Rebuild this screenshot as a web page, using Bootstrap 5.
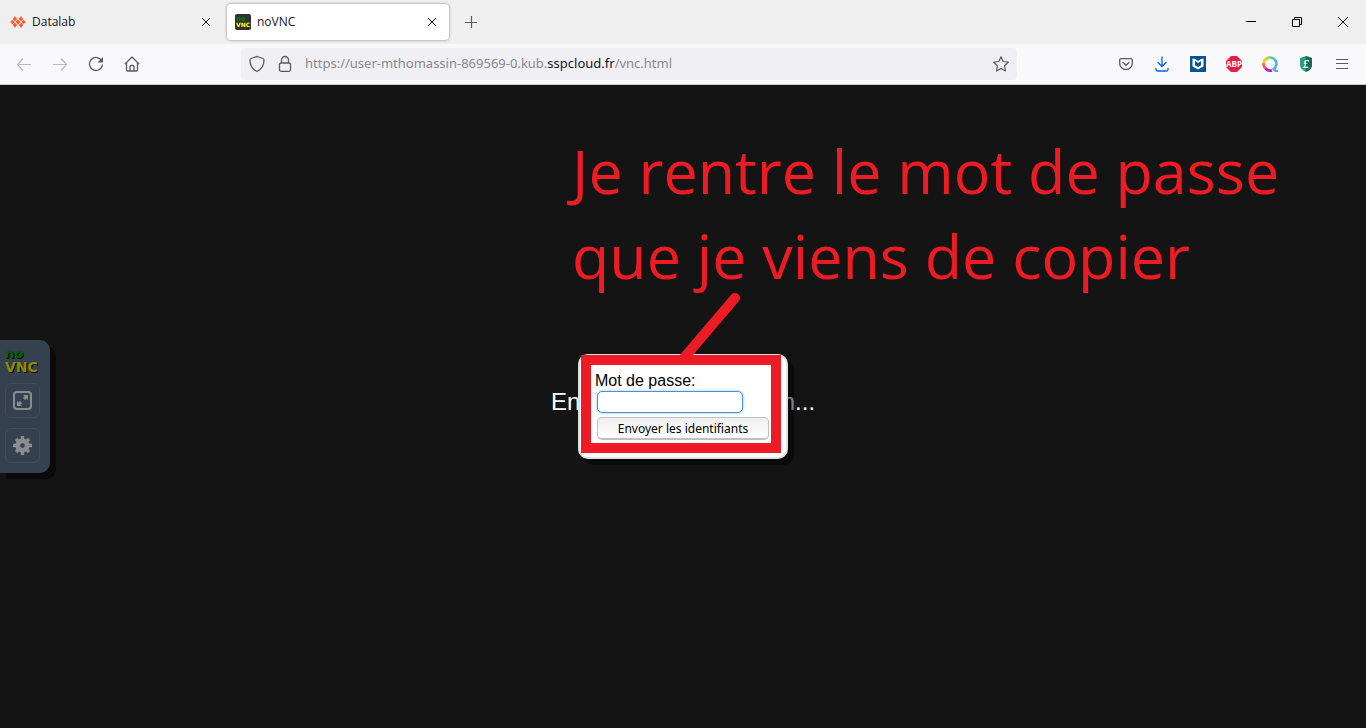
<!DOCTYPE html>
<html lang="fr">
<head>
<meta charset="utf-8">
<meta name="viewport" content="width=device-width, initial-scale=1">
<title>noVNC</title>
<link href="https://cdn.jsdelivr.net/npm/bootstrap@5.3.0/dist/css/bootstrap.min.css" rel="stylesheet">
<style>
  body { font-family: "Open Sans", "Noto Sans", sans-serif; font-size: 12px; background: #141414; color: #15141a; }
  button { padding: 0; border: 0; background: none; color: inherit; }
  svg { display: block; flex: none; }
  .tab-strip { background: #efefef; height: 44px; }
  .tab-item { width: 223px; height: 36px; padding: 0 8px 0 10px; margin-right: 4px; }
  .tab-item.current { width: 222px; background: #fff; border-radius: 4px; box-shadow: 0 0 3px #80808e; padding-left: 8px; }
  .tab-item a { color: inherit; text-decoration: none; margin-left: 6px; }
  .tab-close { width: 18px; height: 18px; }
  .win-btn { width: 46px; height: 44px; }
  .toolbar { background: #f9f9fb; height: 41px; border-bottom: 1px solid #ccc; color: #5b5b66; padding: 0 6px; }
  .tool-btn { width: 36px; height: 32px; }
  .tool-btn:disabled { color: #b9b9bf; }
  .url-field { background: #f0f0f4; border-radius: 4px; height: 32px; margin: 0 91px; padding: 0 8px; }
  .url-text { font-family: "Noto Sans", sans-serif; font-size: 13px; color: #88888f; margin-left: 10px; white-space: nowrap; }
  .url-text b { font-weight: 400; color: #15141a; }
  .screen { display: grid; align-items: center; font-family: "Liberation Sans", Arial, sans-serif; }
  .screen > * { grid-area: 1 / 1; }
  .state-text { font-size: 24px; color: #fff; padding-bottom: 10px; }
  .control-bar { width: 50px; height: 133px; background: #364150; border-radius: 0 10px 10px 0; box-shadow: 6px 6px 0 #0a0a0a; padding: 10px 10px 10px 5px; }
  .vnc-logo { font: 700 14px/12px "DejaVu Sans", sans-serif; text-shadow: 1px 1px 0 #000; color: #8c8c00; height: 23px; margin-bottom: 10px; }
  .vnc-logo span { display: block; height: 11px; }
  .vnc-logo .logo-top { color: #006000; font-size: 13px; line-height: 8px; }
  .bar-btn { width: 35px; height: 35px; border: 1px solid #434c5a; border-radius: 6px; color: #8c8c8c; margin-bottom: 10px; }
  .login-box { position: relative; width: 210px; background: #fff; border: 2px solid #e0e0e0; border-radius: 10px; box-shadow: 6px 6px 0 rgba(0,0,0,.5); padding: 15px; }
  .login-box label { font-size: 16px; line-height: 20px; height: 18px; color: #000; }
  .login-box input { width: 146px; height: 22px; margin: 2px; border: 1px solid #4a90d9; border-radius: 5px; box-shadow: 0 0 3px #8fbdf0; outline: 0; padding: 0 6px; }
  .login-box button { width: 172px; height: 23px; margin: 2px; border: 1px solid #c0c0c0; border-bottom-width: 2px; border-radius: 5px; background: linear-gradient(#f0f0f0, #fff); font: 12px "Noto Sans", sans-serif; color: #000; }
  .highlight { position: absolute; left: 1px; top: -1px; width: 200px; height: 98px; border: 10px solid #ed1c24; pointer-events: none; }
  .pointer-line { position: absolute; left: 97px; bottom: 100%; }
  .note { position: absolute; left: -8px; bottom: 100%; margin-bottom: 58px; font: 61px/85px "Open Sans", "Noto Sans", sans-serif; color: #ed1c24; white-space: nowrap; }
</style>
</head>
<body class="d-flex flex-column min-vh-100">
<header>
  <div class="tab-strip d-flex align-items-center">
    <div class="tab-item d-flex align-items-center">
      <svg width="16" height="16" fill="#ff562c"><path d="M5 2.500L7 5 5 7 3 5zM11 2.500L13 5l-2 2-2-2zM2.500 6L4.500 8l-2 2-2-2zM8 5.700L10.200 8 8 10.300 5.800 8zM13.500 6l2 2-2 2-2-2zM5 9l2 2-2 2.500L3 11zM11 9l2 2-2 2.500L9 11z" stroke="#ff562c" stroke-width=".5"/></svg>
      <a href="#" class="flex-grow-1">Datalab</a>
      <button class="tab-close d-flex align-items-center justify-content-center" aria-label="Fermer Datalab"><svg width="10" height="10" stroke="currentColor"><path d="M1 1l8 8M9 1l-8 8"/></svg></button>
    </div>
    <div class="tab-item current d-flex align-items-center">
      <svg width="16" height="16"><rect width="16" height="16" rx="2" fill="#303030"/><text x="1" y="7" font-family="DejaVu Sans" font-size="7" font-weight="700" fill="#087a08">no</text><text x="1" y="13" font-family="DejaVu Sans" font-size="6" font-weight="700" fill="#ff0">VNC</text></svg>
      <a href="#" class="flex-grow-1">noVNC</a>
      <button class="tab-close d-flex align-items-center justify-content-center" aria-label="Fermer noVNC"><svg width="10" height="10" stroke="currentColor"><path d="M1 1l8 8M9 1l-8 8"/></svg></button>
    </div>
    <button class="tool-btn d-flex align-items-center justify-content-center" aria-label="Nouvel onglet"><svg width="12" height="12" stroke="#5b5b66" stroke-width="1.200"><path d="M6.500 0v12M0 6.500h12"/></svg></button>
    <div class="d-flex ms-auto">
      <button class="win-btn d-flex align-items-center justify-content-center" aria-label="Réduire"><svg width="10" height="10" stroke="#000"><path d="M0 4.500h10"/></svg></button>
      <button class="win-btn d-flex align-items-center justify-content-center" aria-label="Restaurer"><svg width="10" height="10" fill="none" stroke="#000"><path d="M.5 2.500h7v7h-7zM2.500 2.500v-2h7v7h-2"/></svg></button>
      <button class="win-btn d-flex align-items-center justify-content-center" aria-label="Fermer"><svg width="10" height="10" stroke="#000" stroke-width=".9"><path d="M0 0l10 10M10 0L0 10"/></svg></button>
    </div>
  </div>
  <nav class="toolbar d-flex align-items-center" aria-label="Navigation">
    <button disabled class="tool-btn d-flex align-items-center justify-content-center" aria-label="Précédent"><svg width="16" height="16" fill="none" stroke="currentColor" stroke-width="1.200"><path d="M15 8.500H1.500M7 2.500l-5.500 6 5.500 6"/></svg></button>
    <button disabled class="tool-btn d-flex align-items-center justify-content-center" aria-label="Suivant"><svg width="16" height="16" fill="none" stroke="currentColor" stroke-width="1.200"><path d="M1 8.500h13.500M9 2.500l5.500 6-5.500 6"/></svg></button>
    <button class="tool-btn d-flex align-items-center justify-content-center" aria-label="Actualiser"><svg width="16" height="16" fill="none" stroke="currentColor" stroke-width="1.300"><path d="M13.800 5A6.500 6.500 0 1 0 14.500 8.500"/><path d="M15 1v5.500H9.500z" fill="currentColor" stroke="none"/></svg></button>
    <button class="tool-btn d-flex align-items-center justify-content-center" aria-label="Accueil"><svg width="16" height="16" fill="none" stroke="currentColor" stroke-width="1.300" stroke-linejoin="round"><path d="M1 8l7-7 7 7M2.500 7v7q0 1 1 1h9q1 0 1-1V7M6 15v-4.500q0-1 1-1h2q1 0 1 1V15"/></svg></button>
    <div class="url-field d-flex align-items-center flex-grow-1">
      <svg width="16" height="18" fill="none" stroke="currentColor" stroke-width="1.300"><path d="M8 1.500l6 2q1 .3 1 1.500c0 6-3 9.500-7 11.500-4-2-7-5.500-7-11.500q0-1.200 1-1.500z"/></svg>
      <svg class="ms-2" width="24" height="18" fill="none" stroke="currentColor" stroke-width="1.300"><rect x="6.500" y="8" width="11" height="8.300" rx="1.500"/><path d="M8.500 8V5a3.500 3.500 0 0 1 7 0v3"/></svg>
      <div class="url-text flex-grow-1 ms-2">https://user-mthomassin-869569-0.kub.<b>sspcloud.fr</b>/vnc.html</div>
      <button aria-label="Marquer cette page"><svg width="16" height="16" fill="none" stroke="currentColor" stroke-width="1.200" stroke-linejoin="round"><path d="M8 .8l2.200 4.700 5.100.7-3.700 3.600.9 5.200L8 12.500 3.500 15l.9-5.200L.7 6.200l5.100-.7z"/></svg></button>
    </div>
    <button class="tool-btn d-flex align-items-center justify-content-center" aria-label="Pocket"><svg width="14" height="14" fill="none" stroke="currentColor" stroke-width="1.300" stroke-linecap="round"><path d="M2 1.700h10q1.300 0 1.300 1.300v3.500a6.300 6 0 0 1-12.600 0V3Q.7 1.700 2 1.700zM4 5.500l3 2.800 3-2.800"/></svg></button>
    <button class="tool-btn d-flex align-items-center justify-content-center" aria-label="Téléchargements"><svg width="14" height="16" fill="none" stroke="#0061e0" stroke-width="1.300" stroke-linecap="round"><path d="M7 1v9.500M3 6.500l4 4 4-4M1 12.500v1q0 1.500 1.500 1.500h9q1.500 0 1.500-1.500v-1"/></svg></button>
    <button class="tool-btn d-flex align-items-center justify-content-center" aria-label="Web Advisor"><svg width="16" height="16"><path fill="#07548f" d="M0 0h16v16H0z"/><path fill="#fff" d="M2.500 2.500L5 3l3 2 3-2 2.500-.5v8L8 13.500l-5.500-3z"/><path fill="#07548f" d="M5 5l3 2 3-2v4.200L8 11 5 9.200z"/></svg></button>
    <button class="tool-btn d-flex align-items-center justify-content-center" aria-label="Adblock Plus"><svg width="16" height="16"><path fill="#ed1e45" d="M5 0h6l5 5v6l-5 5H5l-5-5V5z"/><text x="8" y="11" text-anchor="middle" font-family="Open Sans" font-weight="700" font-size="8" fill="#fff">ABP</text></svg></button>
    <button class="tool-btn d-flex align-items-center justify-content-center" aria-label="Recherche"><svg width="16" height="16" fill="none" stroke-width="2.600"><path stroke="#ffc21c" d="M1.500 8A6.500 6.500 0 0 1 5 2.300"/><path stroke="#a0d53b" d="M4.500 2.500A6.500 6.500 0 0 1 9 1.500"/><path stroke="#53c9be" d="M8.500 1.500A6.500 6.500 0 0 1 14 5.500"/><path stroke="#5aa9ef" d="M13.500 4.500A6.500 6.500 0 0 1 11.800 13l2.200 2.400h2"/><path stroke="#ff574d" d="M1.500 7.500A6.500 6.500 0 0 0 4 12.800"/><path stroke="#b51be0" d="M3.500 12.500A6.500 6.500 0 0 0 10 14.400"/></svg></button>
    <button class="tool-btn d-flex align-items-center justify-content-center" aria-label="Protection"><svg width="12" height="16"><path fill="#2a9c7c" d="M6 0l6 2v7q0 4-6 7-6-3-6-7V2z"/><path fill="#176b59" d="M6 0l6 2v7q0 4-6 7z"/><text x="6" y="12" text-anchor="middle" font-family="Liberation Serif" font-style="italic" font-weight="700" font-size="12" fill="#fff">£</text></svg></button>
    <button class="tool-btn d-flex align-items-center justify-content-center" aria-label="Menu"><svg width="12" height="12" stroke="currentColor"><path d="M0 1.500h12M0 5.500h12M0 10.500h12"/></svg></button>
  </nav>
</header>
<main class="screen flex-grow-1">
  <div class="state-text text-center">En cours de connexion...</div>
  <aside class="control-bar">
    <div class="vnc-logo"><span class="logo-top">no</span><span>VNC</span></div>
    <button class="bar-btn d-flex align-items-center justify-content-center" aria-label="Plein écran"><svg width="19" height="19" fill="none" stroke="currentColor" stroke-width="2"><rect x="1" y="1" width="17" height="17" rx="3"/><path fill="currentColor" stroke="none" d="M10 4h5v5l-1.500-1.500L12 9l-2-2 1.500-1.500zM4 15v-5l1.500 1.500L7 10l2 2-1.500 1.500L9 15z"/></svg></button>
    <button class="bar-btn d-flex align-items-center justify-content-center mb-0" aria-label="Paramètres"><svg width="19" height="19" viewBox="-10 -10 20 20" fill="none" stroke="currentColor"><circle r="5" stroke-width="5"/><path stroke-width="3.600" d="M0-10v4M0 6v4M-10 0h4M6 0h4M-6.800-6.800l3 3M3.800 3.800l3 3M-6.800 6.800l3-3M3.800-3.800l3-3"/></svg></button>
  </aside>
  <form class="login-box mx-auto">
    <label class="d-block" for="password">Mot de passe:</label>
    <input class="d-block" id="password" type="password">
    <button class="d-block mt-1" type="button">Envoyer les identifiants</button>
    <div class="highlight"></div>
    <svg class="pointer-line" width="70" height="66"><path d="M6 69L58 8" stroke="#ed1c24" stroke-width="10" stroke-linecap="round"/></svg>
    <div class="note">Je rentre le mot de passe<br>que je viens de copier</div>
  </form>
</main>
<script src="https://cdn.jsdelivr.net/npm/bootstrap@5.3.0/dist/js/bootstrap.bundle.min.js"></script>
</body>
</html>
